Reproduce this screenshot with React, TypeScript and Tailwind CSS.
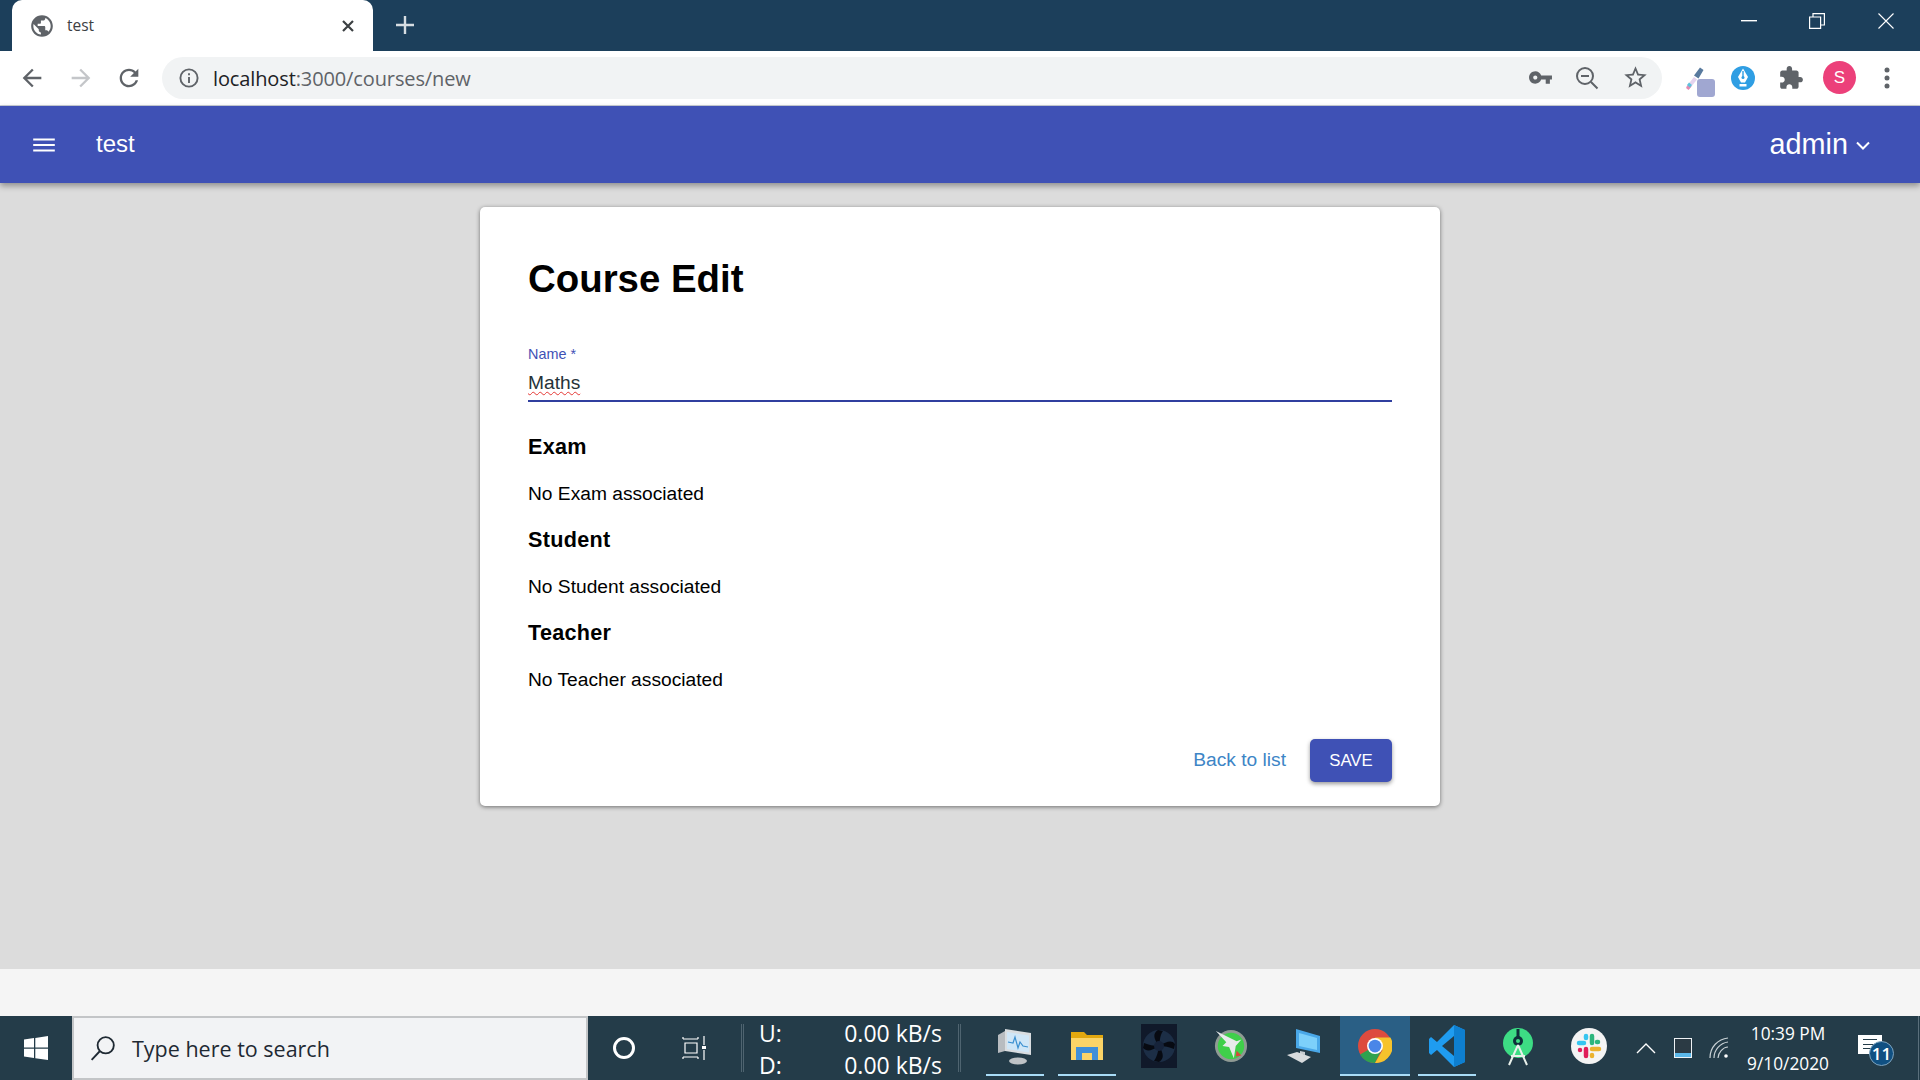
const sans = "font-['Liberation_Sans',Arial,sans-serif]";

function MaterialIcon({ d, className }: { d: string; className: string }) {
  return (
    <svg viewBox="0 0 24 24" className={className} fill="currentColor" aria-hidden="true">
      <path d={d} />
    </svg>
  );
}

const paths = {
  back: "M20 11H7.83l5.59-5.59L12 4l-8 8 8 8 1.41-1.41L7.83 13H20v-2z",
  reload:
    "M17.65 6.35C16.2 4.9 14.21 4 12 4c-4.42 0-7.99 3.58-7.99 8s3.57 8 7.99 8c3.73 0 6.84-2.55 7.73-6h-2.08c-.82 2.33-3.04 4-5.65 4-3.31 0-6-2.69-6-6s2.69-6 6-6c1.66 0 3.14.69 4.22 1.78L13 11h7V4l-2.35 2.35z",
  menu: "M3 18h18v-2H3v2zm0-5h18v-2H3v2zm0-7v2h18V6H3z",
  star: "M22 9.24l-7.19-.62L12 2 9.19 8.63 2 9.24l5.46 4.73L5.82 21 12 17.27 18.18 21l-1.63-7.03L22 9.24zM12 15.4l-3.76 2.27 1-4.28-3.32-2.88 4.38-.38L12 6.1l1.71 4.04 4.38.38-3.32 2.88 1 4.28L12 15.4z",
  puzzle:
    "M20.5 11H19V7c0-1.1-.9-2-2-2h-4V3.5C13 2.12 11.88 1 10.5 1S8 2.12 8 3.5V5H4c-1.1 0-1.99.9-1.99 2v3.8H3.5c1.49 0 2.7 1.21 2.7 2.7s-1.21 2.7-2.7 2.7H2V20c0 1.1.9 2 2 2h3.8v-1.5c0-1.49 1.21-2.7 2.7-2.7 1.49 0 2.7 1.21 2.7 2.7V22H17c1.1 0 2-.9 2-2v-4h1.5c1.38 0 2.5-1.12 2.5-2.5S21.88 11 20.5 11z",
  key: "M12.65 10C11.83 7.67 9.61 6 7 6c-3.31 0-6 2.69-6 6s2.69 6 6 6c2.61 0 4.83-1.67 5.65-4H17v4h4v-4h2v-4H12.65zM7 14c-1.1 0-2-.9-2-2s.9-2 2-2 2 .9 2 2-.9 2-2 2z",
  globe:
    "M12 2C6.48 2 2 6.48 2 12s4.48 10 10 10 10-4.48 10-10S17.52 2 12 2zm-1 17.93c-3.95-.49-7-3.85-7-7.93 0-.62.08-1.21.21-1.79L9 15v1c0 1.1.9 2 2 2v1.93zm6.9-2.54c-.26-.81-1-1.39-1.9-1.39h-1v-3c0-.55-.45-1-1-1H8v-2h2c.55 0 1-.45 1-1V7h2c1.1 0 2-.9 2-2v-.41c2.93 1.19 5 4.06 5 7.41 0 2.08-.8 3.97-2.1 5.39z",
};

function TabStrip() {
  return (
    <div className="flex h-[51px] items-start bg-[#1c3f5b]">
      <div className="ml-3 flex h-[51px] w-[361px] items-center rounded-t-[10px] bg-white pl-[17px] pr-[18px] text-[#5f6368]">
        <MaterialIcon d={paths.globe} className="h-[26px] w-[26px]" />
        <span className="ml-[12px] flex-1 font-['Open_Sans',sans-serif] text-[15.5px] text-[#3c4043]">test</span>
        <svg viewBox="0 0 14 14" className="h-[14px] w-[14px] text-[#3c4043]" stroke="currentColor" strokeWidth="2.2">
          <path d="M2 2l10 10M12 2L2 12" />
        </svg>
      </div>
      <svg viewBox="0 0 20 20" className="ml-[22px] mt-[15px] h-[20px] w-[20px] text-[#d6dde2]" stroke="currentColor" strokeWidth="2.4">
        <path d="M10 1v18M1 10h18" />
      </svg>
      <div className="ml-auto flex h-[42px] items-center text-white">
        <svg viewBox="0 0 16 2" className="mr-[52px] h-[2px] w-[16px]" fill="currentColor">
          <rect width="16" height="1.4" />
        </svg>
        <svg viewBox="0 0 16 16" className="mr-[53px] h-[16px] w-[16px]" fill="none" stroke="currentColor" strokeWidth="1.2">
          <path d="M.6 4h11v11.4H.6zM4 4V.6h11.4V12H11.6" />
        </svg>
        <svg viewBox="0 0 16 16" className="mr-[26px] h-[16px] w-[16px]" fill="none" stroke="currentColor" strokeWidth="1.1">
          <path d="M.5.5l15 15M15.5.5l-15 15" />
        </svg>
      </div>
    </div>
  );
}

function Toolbar() {
  return (
    <div className="flex h-[55px] items-center border-b border-[#c9ced6] bg-white pb-[2px] pt-[1px] text-[#5f6368]">
      <div className="flex w-[162px] items-center">
        <MaterialIcon d={paths.back} className="ml-[18px] h-[28px] w-[28px]" />
        <MaterialIcon d={paths.back} className="ml-[21px] h-[28px] w-[28px] rotate-180 text-[#c4c6c9]" />
        <MaterialIcon d={paths.reload} className="ml-[20px] h-[28px] w-[28px]" />
      </div>
      <div className="flex h-[42px] w-[1500px] items-center rounded-full bg-[#f1f3f4] pl-[17px]">
        <svg viewBox="0 0 20 20" className="h-[20px] w-[20px]" fill="none" stroke="currentColor" strokeWidth="1.9">
          <circle cx="10" cy="10" r="8.6" />
          <path d="M10 9v6M10 5.2v2" />
        </svg>
        <span className="ml-[14px] pt-[2px] font-['Open_Sans',sans-serif] text-[20px] tracking-[-0.12px] text-[#202124]">
          localhost<span className="text-[#5f6368]">:3000/courses/new</span>
        </span>
        <MaterialIcon d={paths.key} className="ml-auto h-[25px] w-[25px]" />
        <svg viewBox="0 0 24 24" className="ml-[22px] h-[24px] w-[24px]" fill="none" stroke="currentColor" strokeWidth="2">
          <circle cx="10" cy="10" r="8" />
          <path d="M6 10h8M16 16l6.5 6.5" />
        </svg>
        <MaterialIcon d={paths.star} className="ml-[23px] h-[27px] w-[27px]" />
        <span className="w-[13px]" />
      </div>
      <div className="relative ml-[21px] h-[32px] w-[32px]">
        <svg viewBox="0 0 32 32" className="h-[32px] w-[32px]">
          <path d="M3 25l8-10 3 2.500-8 10z" fill="#e4d3ee" />
          <path d="M3 26l2.500 2 3-3.500-3-2.500z" fill="#e58ab0" />
          <path d="M4 23l3 2.500 2-2.500-3-2.500z" fill="#5cc3dd" />
          <path d="M11 13.500l6-8 3.500 2.500-5 8.500z" fill="#587a9e" />
        </svg>
        <div className="absolute bottom-[-3px] left-[14px] h-[18px] w-[18px] rounded-[3px] bg-[#a0a7d1]" />
      </div>
      <svg viewBox="0 0 24 24" className="ml-[16px] h-[24px] w-[24px]">
        <circle cx="12" cy="12" r="12" fill="#2f9ee3" />
        <path d="M12 2.500l5 8.500-3 5.500h-4L7 11z" fill="#fff" />
        <path d="M12 5v6" stroke="#2f9ee3" strokeWidth="1.400" />
        <circle cx="12" cy="11.500" r="1.500" fill="#2f9ee3" />
        <path d="M8.500 18h7v2.500h-7z" fill="#fff" />
      </svg>
      <MaterialIcon d={paths.puzzle} className="ml-[23px] h-[26px] w-[26px]" />
      <div className={`ml-[19px] flex h-[33px] w-[33px] items-center justify-center rounded-full bg-[#ec407a] text-[17px] text-white ${sans}`}>S</div>
      <svg viewBox="0 0 6 22" className="ml-[28px] h-[22px] w-[6px]" fill="currentColor">
        <circle cx="3" cy="3" r="2.500" />
        <circle cx="3" cy="11" r="2.500" />
        <circle cx="3" cy="19" r="2.500" />
      </svg>
    </div>
  );
}

function AppBar() {
  return (
    <header className={`relative z-10 flex h-[77px] items-center bg-[#3f51b5] pl-[32px] pr-[50px] text-white shadow-[0_3px_6px_rgba(0,0,0,0.35)] ${sans}`}>
      <MaterialIcon d={paths.menu} className="h-[24px] w-[24px] scale-x-[1.2] scale-y-110" />
      <span className="ml-[40px] mb-[2px] flex-1 text-[24px]">test</span>
      <span className="text-[28.800px]">admin</span>
      <svg viewBox="0 0 14 9" className="ml-[8px] mt-[2px] h-[9px] w-[14px]" fill="none" stroke="currentColor" strokeWidth="2">
        <path d="M1 1.500l6 6 6-6" />
      </svg>
    </header>
  );
}

function RelatedSection({ title }: { title: string }) {
  return (
    <section className="h-[93px]">
      <h2 className="pt-[6px] text-[21.600px] font-bold leading-[26px] tracking-[0.3px]">{title}</h2>
      <p className="mt-[22px] text-[19.200px] leading-[24px]">No {title} associated</p>
    </section>
  );
}

function CourseForm() {
  return (
    <main className="flex h-[786px] justify-center bg-[#dcdcdc] pt-[24px]">
      <div className={`h-[599px] w-[960px] rounded-[5px] bg-white px-[48px] pt-[50px] text-black shadow-[0_1px_4px_rgba(0,0,0,0.5)] ${sans}`}>
        <h1 className="text-[38.400px] font-bold leading-[44px]">Course Edit</h1>
        <div className="mt-[45px] border-b-2 border-[#303f9f] pb-[5px]">
          <label className="block text-[14.400px] leading-[16px] text-[#3f51b5]">Name *</label>
          <span className="mt-[9px] block text-[19.200px] leading-[24px] text-[#263238]">
            <span className="underline decoration-[#e53935] decoration-wavy decoration-1 underline-offset-[2px]">Maths</span>
          </span>
        </div>
        <div className="mt-[26px]">
          <RelatedSection title="Exam" />
          <RelatedSection title="Student" />
          <RelatedSection title="Teacher" />
        </div>
        <div className="mt-[32px] flex items-center justify-end">
          <a className="text-[19.200px] text-[#3d85c6]">Back to list</a>
          <button className="ml-[24px] h-[43px] w-[82px] rounded-[5px] bg-[#3f51b5] text-[16.800px] text-white shadow-[0_2px_4px_rgba(0,0,0,0.4)]">SAVE</button>
        </div>
      </div>
    </main>
  );
}

function AppSlot({ children, running, active }: { children: React.ReactNode; running?: boolean; active?: boolean }) {
  return (
    <div className="relative flex h-[64px] w-[72px] items-center justify-center pb-[4px]">
      {active && <div className="absolute left-[1px] top-0 h-[60px] w-[70px] bg-[#2a5f85]" />}
      <div className="relative">{children}</div>
      {running && <div className={`absolute top-[58px] h-[2px] ${active ? "left-[1px] w-[70px]" : "left-[7px] w-[58px]"} bg-[#a9dcf7]`} />}
    </div>
  );
}

function ChromeLogo() {
  return (
    <svg viewBox="0 0 32 32" className="h-[34px] w-[34px]">
      <circle cx="16" cy="16" r="16" fill="#dd4b3e" />
      <path d="M16 16L2 24A16 16 0 0 0 16 32l8-16z" fill="#2fa24f" />
      <path d="M16 8h14.500A16 16 0 0 1 16 32l7-12z" fill="#f6c32c" />
      <circle cx="16" cy="16" r="7.500" fill="#fff" />
      <circle cx="16" cy="16" r="6" fill="#4a86e8" />
    </svg>
  );
}

function Taskbar() {
  return (
    <footer className="flex h-[64px] items-center bg-[#243c49] font-['Open_Sans',sans-serif] text-white">
      <div className="flex w-[72px] justify-center">
        <svg viewBox="0 0 24 24" className="h-[24px] w-[24px]" fill="currentColor">
          <path d="M0 3.500l10-1.400v9.300H0zM11.300 1.900L24 0v11.400H11.300zM0 12.700h10V22L0 20.600zM11.300 12.700H24V24l-12.700-1.800z" />
        </svg>
      </div>
      <div className="flex h-[64px] w-[516px] items-center border-2 border-[#c3c5c7] bg-[#f2f3f5] pl-[16px] text-[#1f2933]">
        <svg viewBox="0 0 24 24" className="h-[26px] w-[26px]" fill="none" stroke="currentColor" strokeWidth="1.700">
          <circle cx="14.500" cy="9.500" r="7.500" />
          <path d="M9 15L1.500 23" />
        </svg>
        <span className="ml-[16px] pt-[2px] text-[21.500px]">Type here to search</span>
      </div>
      <div className="flex w-[72px] justify-center">
        <div className="h-[22px] w-[22px] rounded-full border-[3px] border-white" />
      </div>
      <div className="flex w-[70px] justify-center">
        <svg viewBox="0 0 26 24" className="h-[24px] w-[26px]" fill="none" stroke="currentColor" strokeWidth="1.200">
          <path d="M1 3h15M1 1v2M16 1v2M3 7h12v10H3zM1 21h15M1 23v-2M16 23v-2M22 0v9M22 14v10" />
          <rect x="20" y="10" width="4" height="3" fill="currentColor" stroke="none" />
        </svg>
      </div>
      <div className="ml-[11px] h-[48px] w-[3px] border-x border-[#4f6470]" />
      <div className="flex w-[214px] flex-col pl-[15px] pr-[16px] pt-[1px] text-[23px] leading-[32px]">
        <div className="flex justify-between"><span>U:</span><span>0.00 kB/s</span></div>
        <div className="flex justify-between"><span>D:</span><span>0.00 kB/s</span></div>
      </div>
      <div className="h-[48px] w-[3px] border-x border-[#4f6470]" />
      <div className="flex w-[18px]" />
      <AppSlot running>
        <svg viewBox="0 0 36 38" className="h-[38px] w-[36px]">
          <path d="M8 2l26 4v22L8 24z" fill="#d9dde0" />
          <path d="M10 5l22 3.500v17L10 22z" fill="#cfe6f7" />
          <path d="M11 15l5 1 2-6 3 11 2-6 3 4 5 1" fill="none" stroke="#3a8fd0" strokeWidth="1.200" />
          <path d="M1 8l7-4v20l-7 2z" fill="#b8bcc0" />
          <ellipse cx="21" cy="34" rx="9" ry="3.500" fill="#bfc3c6" />
        </svg>
      </AppSlot>
      <AppSlot running>
        <svg viewBox="0 0 32 32" className="h-[32px] w-[32px]">
          <path d="M0 2h13l3 3h16v25H0z" fill="#e2a80f" />
          <path d="M0 8h32v22H0z" fill="#fbd467" />
          <path d="M5 30v-13h22v13h-6v-7H11v7z" fill="#3f8fd8" />
        </svg>
      </AppSlot>
      <AppSlot>
        <svg viewBox="0 0 36 44" className="h-[44px] w-[36px]">
          <rect width="36" height="44" fill="#10192a" />
          <circle cx="18" cy="22" r="16" fill="#1c2e46" />
          <g fill="#070a12">
            <path d="M18 22C12 14 12 9 17 6l5 1c-3 4-3 9-4 15z" />
            <path d="M18 22c8-5 13-6 16-2l-1 5c-5-2-9-3-15-3z" />
            <path d="M18 22c5 8 5 13 0 16l-5-1c3-4 4-9 5-15z" />
            <path d="M18 22c-8 5-12 6-16 2l1-5c5 2 9 3 15 3z" />
          </g>
          <circle cx="18" cy="22" r="5" fill="#16233a" />
        </svg>
      </AppSlot>
      <AppSlot>
        <svg viewBox="0 0 36 38" className="h-[38px] w-[34px]">
          <circle cx="18" cy="19" r="17" fill="#8f9a94" />
          <circle cx="18" cy="19" r="14" fill="#3fcf4a" />
          <path d="M2 3l22 11 5-2-6 7-2 13-5-12-7-1 4-4z" fill="#e8ebec" />
          <path d="M24 24l5 5-6 1z" fill="#d9483b" />
        </svg>
      </AppSlot>
      <AppSlot>
        <svg viewBox="0 0 34 38" className="h-[38px] w-[34px]">
          <path d="M10 2l24 7v17l-24-5z" fill="#4aa8e8" />
          <path d="M13 6l18 5v12L13 19z" fill="#7dd0fa" />
          <path d="M14 24l5 1v3l-5-1z" fill="#c8ccd0" />
          <path d="M1 28l10-3 14 5-9 6z" fill="#d9dcde" />
        </svg>
      </AppSlot>
      <AppSlot running active>
        <ChromeLogo />
      </AppSlot>
      <AppSlot running>
        <svg viewBox="0 0 36 44" className="h-[44px] w-[36px]">
          <path d="M25 1l11 5v32l-11 5-17-17-6 5-2-2v-14l2-2 6 5z" fill="#1f9cf0" />
          <path d="M25 1l11 5v32l-11 5z" fill="#0e7fd0" />
          <path d="M25 12v20L13 22z" fill="#243c49" />
        </svg>
      </AppSlot>
      <AppSlot>
        <svg viewBox="0 0 30 40" className="mr-[2px] h-[40px] w-[30px]">
          <circle cx="15" cy="17" r="15" fill="#3ddc84" />
          <path d="M15 3v8" stroke="#0f2f3a" strokeWidth="3" />
          <circle cx="15" cy="15" r="5" fill="#0f2f3a" />
          <circle cx="15" cy="15" r="2" fill="#3ddc84" />
          <path d="M15 19L6 39M15 19l9 20M8 30h14" stroke="#e8f0ea" strokeWidth="2" fill="none" />
        </svg>
      </AppSlot>
      <AppSlot>
        <svg viewBox="0 0 36 36" className="mr-[4px] h-[36px] w-[36px]">
          <circle cx="18" cy="18" r="18" fill="#f4f4f4" />
          <g strokeLinecap="round" strokeWidth="4.500">
            <path d="M13 15H8M15 10V8" stroke="#36c5f0" />
            <path d="M21 15V8M26 14h1" stroke="#2eb67d" />
            <path d="M21 21h7M21 27v1" stroke="#ecb22e" />
            <path d="M15 21v7M9 22h0" stroke="#e01e5a" />
          </g>
        </svg>
      </AppSlot>
      <div className="flex w-[38px] justify-center">
        <svg viewBox="0 0 20 12" className="h-[12px] w-[20px]" fill="none" stroke="currentColor" strokeWidth="1.400">
          <path d="M1 11l9-9 9 9" />
        </svg>
      </div>
      <div className="flex w-[35px] justify-center">
        <div className="h-[20px] w-[18px] bg-[#eef2f5] p-[1px]">
          <div className="h-[14px] w-full bg-[#2b3a44]" />
          <div className="h-[4px] w-full bg-[#5bb8ea]" />
        </div>
      </div>
      <div className="flex w-[38px] justify-center">
        <svg viewBox="0 0 20 22" className="h-[22px] w-[20px]" fill="none" stroke="#c9d2d6" strokeWidth="1.200">
          <path d="M1 21C1 10 9 2 19 1M5 21C5 13 11 6 19 5M9 21C9 16 14 10 19 10" />
          <circle cx="17" cy="19" r="1.800" fill="#fff" stroke="none" />
        </svg>
      </div>
      <div className="flex w-[100px] flex-col items-center pt-[1px] text-[17.300px] leading-[30px]">
        <span>10:39 PM</span>
        <span>9/10/2020</span>
      </div>
      <div className="relative ml-[20px] h-[32px] w-[26px]">
        <div className="absolute left-0 top-[3px] h-[19px] w-[24px] bg-white" />
        <div className="absolute left-[5px] top-[7px] flex h-[10px] w-[14px] flex-col justify-between">
          <div className="h-[1px] bg-[#243c49]" />
          <div className="h-[1px] bg-[#243c49]" />
          <div className="h-[1px] bg-[#243c49]" />
        </div>
        <div className="absolute left-[11px] top-[9px] flex h-[25px] w-[25px] items-center justify-center rounded-full border border-[#7ea3bd] bg-[#105082] text-[17px] font-semibold">11</div>
      </div>
      <div className="ml-auto mr-[1px] h-[64px] w-[1px] bg-[#5a6f7b]" />
    </footer>
  );
}

export default function App() {
  return (
    <div className="flex h-[1080px] w-[1920px] flex-col overflow-hidden bg-[#f5f5f5]">
      <TabStrip />
      <Toolbar />
      <AppBar />
      <CourseForm />
      <div className="h-[47px] bg-[#f5f5f5]" />
      <Taskbar />
    </div>
  );
}
